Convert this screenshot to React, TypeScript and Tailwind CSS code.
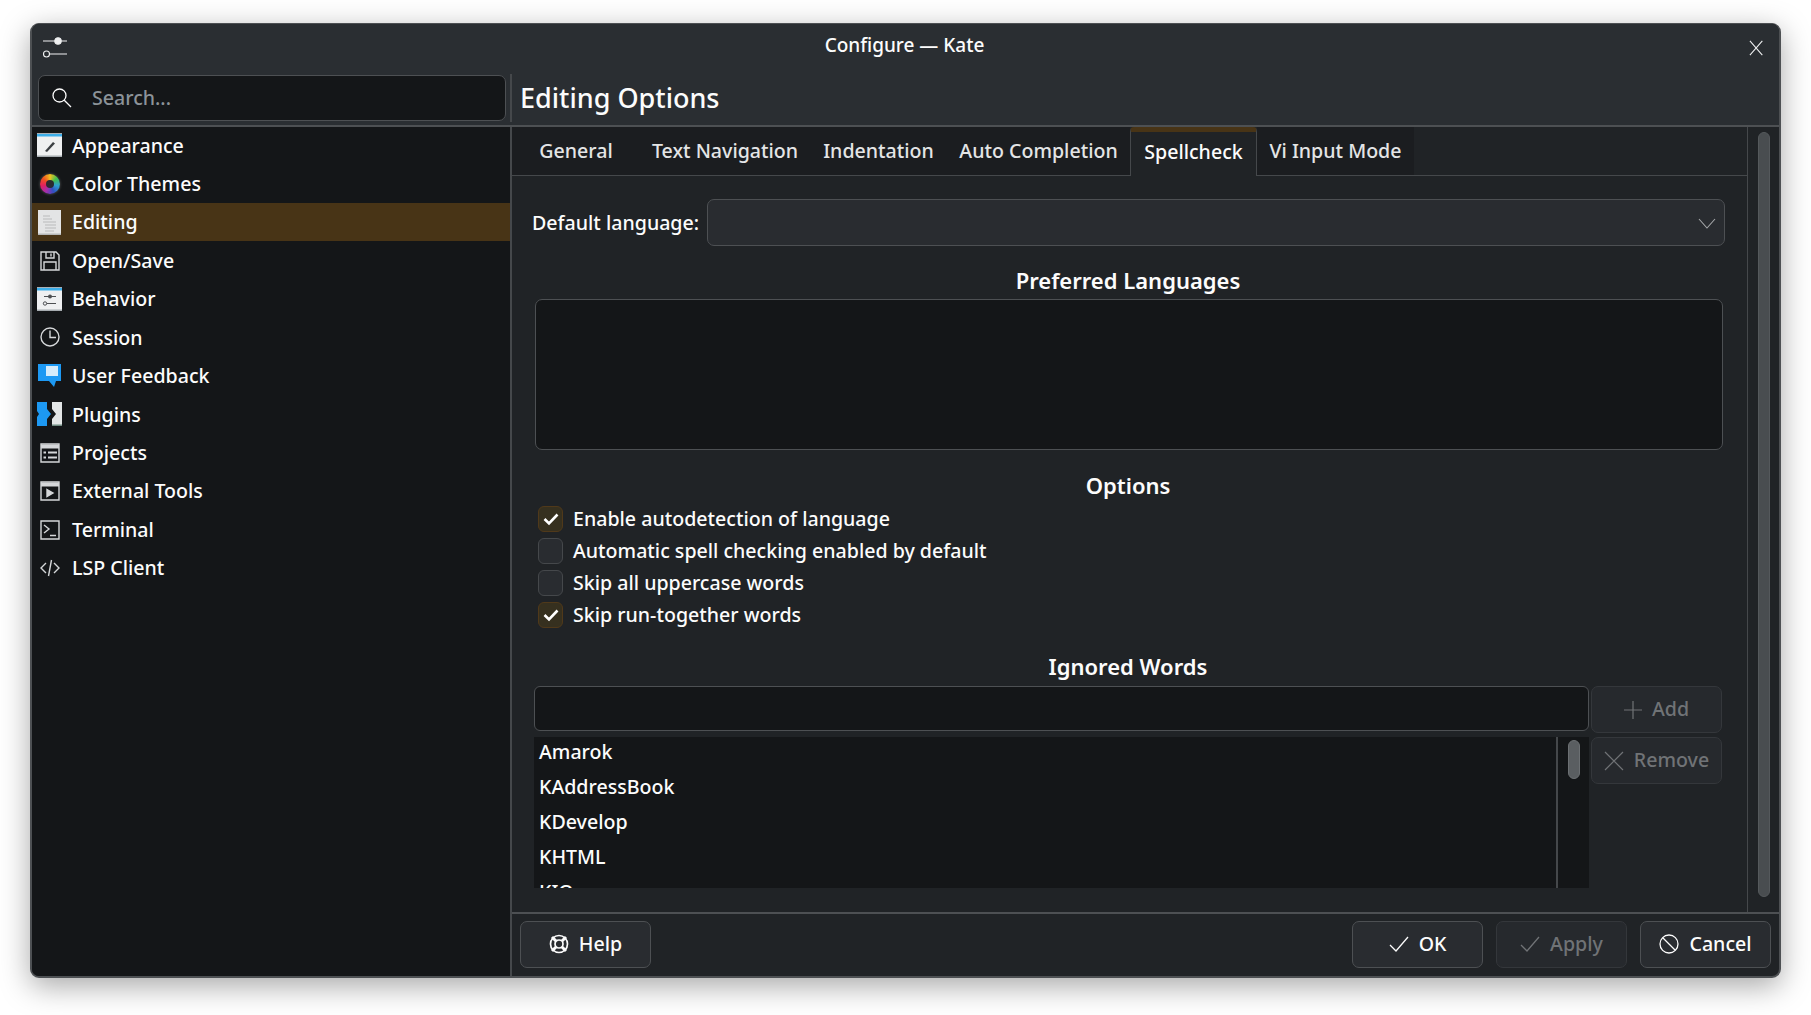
import React from "react";

const font = "font-['Noto_Sans','Open_Sans',sans-serif]";

function Line({ d, size = 20, w = 1.2, vb = 20 }: { d: string; size?: number; w?: number; vb?: number }) {
  return (
    <svg width={size} height={size} viewBox={`0 0 ${vb} ${vb}`} fill="none" stroke="currentColor" strokeWidth={w} className="shrink-0">
      <path d={d} />
    </svg>
  );
}

function WindowIcon({ children }: { children?: React.ReactNode }) {
  return (
    <svg width="25" height="24" viewBox="0 0 25 24" className="shrink-0">
      <rect x="0" y="0" width="25" height="24" fill="#eff0f1" />
      <rect x="0" y="0" width="25" height="1" fill="#a9b0b6" />
      <rect x="0" y="1" width="25" height="2.5" fill="#3daee9" />
      <rect x="0" y="22.5" width="25" height="1.5" fill="#a6acb0" />
      {children}
    </svg>
  );
}

function ColorWheel() {
  return (
    <div className="w-[25px] h-[24px] flex items-center justify-center shrink-0">
      <div className="w-[20px] h-[20px] rounded-full bg-[conic-gradient(#f0c020,#3fbf50,#2f9fd0,#3050c0,#a030b0,#e02060,#f05020,#f0c020)] flex items-center justify-center shadow-[0_0_3px_rgba(255,255,255,0.3)]">
        <div className="w-[8px] h-[8px] rounded-full bg-[#2a2a30]" />
      </div>
    </div>
  );
}

function Mono({ children }: { children: React.ReactNode }) {
  return (
    <div className="w-[25px] h-[24px] flex items-center justify-center shrink-0 text-[#d5d7d9]">
      <svg width="20" height="20" viewBox="0 0 20 20" fill="none" stroke="currentColor" strokeWidth="1.4">
        {children}
      </svg>
    </div>
  );
}

const sidebarItems: { label: string; icon: React.ReactNode }[] = [
  {
    label: "Appearance",
    icon: (
      <WindowIcon>
        <path d="M8 18 L16 9 L18 10.5 L10 19 Z" fill="#3b3f43" />
      </WindowIcon>
    ),
  },
  { label: "Color Themes", icon: <ColorWheel /> },
  {
    label: "Editing",
    icon: (
      <div className="w-[25px] h-[24px] flex items-center justify-center shrink-0">
        <svg width="23" height="25" viewBox="0 0 23 25">
          <rect width="23" height="25" fill="#e3e4e5" />
          <rect y="23.5" width="23" height="1.5" fill="#b5b7b8" />
          <path d="M5 6h7M5 9h9M5 12h13M7 15h11M7 18h11M7 21h9" stroke="#b9babb" strokeWidth="1.1" />
        </svg>
      </div>
    ),
  },
  {
    label: "Open/Save",
    icon: (
      <Mono>
        <path d="M1 1h15l3 3v15H1zM6 1v6h8V1M4 19v-8h12v8M11 2.5v3" />
      </Mono>
    ),
  },
  {
    label: "Behavior",
    icon: (
      <WindowIcon>
        <path d="M7 9.5h12M6 16.5h13" stroke="#4d4f52" strokeWidth="1" />
        <circle cx="13" cy="9.5" r="2" fill="#4d4f52" />
        <circle cx="8" cy="16.5" r="1.7" fill="#eff0f1" stroke="#4d4f52" />
      </WindowIcon>
    ),
  },
  {
    label: "Session",
    icon: (
      <Mono>
        <circle cx="10" cy="10" r="9" />
        <path d="M10 3.5V10.5H16" />
      </Mono>
    ),
  },
  {
    label: "User Feedback",
    icon: (
      <div className="w-[25px] h-[24px] flex items-center justify-center shrink-0">
        <svg width="23" height="23" viewBox="0 0 23 23">
          <path d="M0 0H23V17H18L16 23L11 17H0Z" fill="#1d99f3" />
          <rect x="8" y="2" width="12" height="10" fill="#d6ecfb" />
        </svg>
      </div>
    ),
  },
  {
    label: "Plugins",
    icon: (
      <svg width="25" height="24" viewBox="0 0 25 24" className="shrink-0">
        <path d="M0 0H10V7L14 12L10 17V24H0V15L2 12L0 9Z" fill="#1d99f3" />
        <path d="M25 0H15V7L19 12L15 17V24H25Z" fill="#e3e6e6" />
        <rect x="15" y="22.5" width="10" height="1.5" fill="#6f8a80" />
      </svg>
    ),
  },
  {
    label: "Projects",
    icon: (
      <Mono>
        <path d="M1 1h18v18H1z" />
        <path d="M1 3.5h18" strokeWidth="4" />
        <path d="M8 9.5h9M8 14.5h9M3.5 9.5h2.5M3.5 14.5h2.5" strokeWidth="1.8" />
      </Mono>
    ),
  },
  {
    label: "External Tools",
    icon: (
      <Mono>
        <path d="M1 1h18v18H1z" />
        <path d="M1 3.5h18" strokeWidth="4" />
        <path d="M7 8.5l6 3.5-6 3.5z" fill="currentColor" />
      </Mono>
    ),
  },
  {
    label: "Terminal",
    icon: (
      <Mono>
        <path d="M1 1h18v18H1zM4 5l5 4-5 4M10 15.5h6" />
      </Mono>
    ),
  },
  {
    label: "LSP Client",
    icon: (
      <Mono>
        <path d="M6 5L1 10l5 5M14 5l5 5-5 5M11.5 2L8.5 18" />
      </Mono>
    ),
  },
];

function SidebarRow({ label, icon, active }: { label: string; icon: React.ReactNode; active?: boolean }) {
  return (
    <div className={`h-[38.45px] pl-[5px] flex items-center gap-[10px] ${active ? "bg-[#483416]" : ""}`}>
      {icon}
      <span className="text-[19.6px] text-[#fcfcfc]">{label}</span>
    </div>
  );
}

const tabs = [
  { label: "General", w: "w-[128px]" },
  { label: "Text Navigation", w: "w-[170px]" },
  { label: "Indentation", w: "w-[137px]" },
  { label: "Auto Completion", w: "w-[183px]" },
  { label: "Spellcheck", w: "w-[127px]", active: true },
  { label: "Vi Input Mode", w: "w-[157px]" },
];

function TabBar() {
  return (
    <div className="h-[49px] flex border-b border-[#45484b]">
      {tabs.map((t) =>
        t.active ? (
          <div
            key={t.label}
            className={`${t.w} h-[49px] -mb-px pb-[4px] flex items-center justify-center text-[19.6px] text-[#fcfcfc] bg-[#202326] border-x border-[#45484b] border-t-[5px] border-t-[#483416] rounded-t-[4px]`}
          >
            {t.label}
          </div>
        ) : (
          <div key={t.label} className={`${t.w} flex items-center justify-center text-[19.6px] text-[#e4e5e6] bg-[#1b1d20]`}>
            {t.label}
          </div>
        )
      )}
    </div>
  );
}

function Check({ label, on }: { label: string; on?: boolean }) {
  return (
    <div className="h-[32px] flex items-center gap-[10px]">
      <div
        className={`ml-[4px] w-[25px] h-[26px] rounded-[6px] border flex items-center justify-center text-white ${
          on ? "border-[#50391a] bg-[#36301f]" : "border-[#45484b] bg-[#292c30]"
        }`}
      >
        {on && <Line d="M3.5 10l4.5 4.5 8.5-9" size={20} w={2.6} />}
      </div>
      <span className="text-[19.6px] text-[#fcfcfc]">{label}</span>
    </div>
  );
}

function Heading({ children, className = "" }: { children: React.ReactNode; className?: string }) {
  return <div className={`h-[30px] pr-[1px] text-center text-[22px] leading-[28px] font-semibold text-[#fcfcfc] ${className}`}>{children}</div>;
}

function Btn({
  icon,
  label,
  disabled,
  className = "",
}: {
  icon: React.ReactNode;
  label: string;
  disabled?: boolean;
  className?: string;
}) {
  return (
    <div
      className={`w-[131px] h-[47px] rounded-[7px] border flex items-center justify-center gap-[10px] text-[19.6px] ${
        disabled ? "border-[#34373b] bg-[#26292d] text-[#707376]" : "border-[#4d5053] bg-[#292c30] text-[#fcfcfc]"
      } ${className}`}
    >
      {icon}
      <span className="-mt-[1px]">{label}</span>
    </div>
  );
}

export default function App() {
  return (
    <div className={`w-[1811px] h-[1015px] bg-white pt-[23px] pl-[30px] overflow-hidden font-medium ${font}`}>
      <div className="w-[1751px] h-[955px] rounded-[9px] overflow-hidden border-x-2 border-b-2 border-t border-[#4d5053] bg-[#202326] flex flex-col shadow-[0_8px_30px_rgba(0,0,0,0.35)]">
        {/* header */}
        <div className="h-[103px] shrink-0 bg-[#2a2e32] border-b-2 border-[#4d5053] flex flex-col">
          <div className="h-[47px] flex items-center justify-between">
            <div className="w-[60px] pl-[10px] pb-[2px] text-[#eff0f1]">
              <svg width="26" height="26" viewBox="0 0 26 26" fill="none" stroke="currentColor" strokeWidth="1.1">
                <path d="M1 7h24M1 20h24" />
                <circle cx="16" cy="7" r="3.2" fill="currentColor" />
                <circle cx="4.5" cy="20" r="3" fill="#2a2e32" />
              </svg>
            </div>
            <div className="mr-[2px] pb-[5px] text-[19px] text-[#fcfcfc]">Configure — Kate</div>
            <div className="w-[60px] pl-[30px] text-[#eff0f1]">
              <Line d="M1 1l14 16M15 1L1 17" size={16} vb={18} w={1.2} />
            </div>
          </div>
          <div className="flex items-center flex-1">
            <div className="ml-[6px] w-[468px] h-[46px] rounded-[7px] border border-[#4d5053] bg-[#141618] flex items-center pl-[13px] gap-[20px] text-[#fcfcfc]">
              <Line d="M12.5 12.5L19 19M14 7.5a6.5 6.5 0 1 1-13 0a6.5 6.5 0 0 1 13 0z" size={20} w={1.3} />
              <span className="text-[19.6px] text-[#8c9399]">Search...</span>
            </div>
            <div className="ml-[4px] w-[2px] h-[48px] bg-[#45484b]" />
            <div className="ml-[8px] pt-[1px] text-[27px] text-[#fcfcfc]">Editing Options</div>
          </div>
        </div>

        <div className="flex-1 flex min-h-0">
          {/* sidebar */}
          <div className="w-[478px] shrink-0 bg-[#141618] border-r-2 border-[#45484b] box-content">
            <div className="-mt-[1px]">
              {sidebarItems.map((it) => (
                <SidebarRow key={it.label} label={it.label} icon={it.icon} active={it.label === "Editing"} />
              ))}
            </div>
          </div>

          {/* right column */}
          <div className="flex-1 flex flex-col min-w-0">
            <div className="h-[785px] flex shrink-0">
              <div className="flex-1 min-w-0">
                <TabBar />
                <div className="pl-[20px] pr-[22px]">
                  <div className="mt-[23px] h-[47px] flex items-center">
                    <span className="w-[175px] shrink-0 text-[19.6px] whitespace-nowrap text-[#fcfcfc]">Default language:</span>
                    <div className="flex-1 h-[47px] rounded-[7px] border border-[#4d5053] bg-[#292c30] flex items-center justify-end pr-[8px] text-[#a5a8aa]">
                      <Line d="M1 5l8 9 8-9" size={18} vb={18} w={1.1} />
                    </div>
                  </div>
                  <Heading className="mt-[20px]">Preferred Languages</Heading>
                  <div className="mt-[3px] ml-[3px] mr-[2px] h-[151px] rounded-[7px] border border-[#4d5053] bg-[#141618]" />
                  <Heading className="mt-[21px]">Options</Heading>
                  <div className="mt-[2px] ml-[2px]">
                    <Check label="Enable autodetection of language" on />
                    <Check label="Automatic spell checking enabled by default" />
                    <Check label="Skip all uppercase words" />
                    <Check label="Skip run-together words" on />
                  </div>
                  <Heading className="mt-[21px]">Ignored Words</Heading>
                  <div className="mt-[4px] ml-[2px] flex gap-[2px]">
                    <div className="w-[1055px]">
                      <div className="h-[45px] rounded-[6px] border border-[#4d5053] bg-[#141618]" />
                      <div className="mt-[6px] h-[151px] bg-[#141618] flex overflow-hidden">
                        <div className="flex-1 pl-[5px] -mt-[3px] text-[19.6px] text-[#fcfcfc]">
                          {["Amarok", "KAddressBook", "KDevelop", "KHTML", "KIO"].map((w) => (
                            <div key={w} className="h-[35px] flex items-center">
                              {w}
                            </div>
                          ))}
                        </div>
                        <div className="w-[33px] border-l-2 border-[#45484b] pt-[3px] pl-[10px]">
                          <div className="w-[12px] h-[39px] rounded-full bg-[#5a5e61] border border-[#6c7073]" />
                        </div>
                      </div>
                    </div>
                    <div className="flex flex-col gap-[4px]">
                      <Btn disabled label="Add" className="h-[47px] w-[130px]" icon={<Line d="M9 0v18M0 9h18" size={18} vb={18} w={1.2} />} />
                      <Btn disabled label="Remove" className="h-[47px] w-[130px]" icon={<Line d="M1 1l18 18M19 1L1 19" size={20} vb={20} w={1.2} />} />
                    </div>
                  </div>
                </div>
              </div>
              <div className="w-[32px] shrink-0 border-l border-[#45484b] pt-[5px] pl-[10px]">
                <div className="w-[12px] h-[765px] rounded-full bg-[#494d50] border border-[#55595c]" />
              </div>
            </div>

            {/* footer */}
            <div className="flex-1 border-t-2 border-[#4d5053] flex items-center justify-between pl-[8px] pr-[8px] pb-[2px]">
              <Btn
                label="Help"
                icon={
                  <svg width="20" height="20" viewBox="0 0 20 20" fill="none" stroke="currentColor" strokeWidth="1.7">
                    <circle cx="10" cy="10" r="8.5" />
                    <circle cx="10" cy="10" r="4" />
                    <path d="M3 3l4 4M17 3l-4 4M3 17l4-4M17 17l-4-4" strokeWidth="3" />
                  </svg>
                }
              />
              <div className="flex gap-[13px]">
                <Btn label="OK" icon={<Line d="M1 11l6 6L19 3" size={20} w={1.3} />} />
                <Btn disabled label="Apply" icon={<Line d="M1 11l6 6L19 3" size={20} w={1.3} />} />
                <Btn label="Cancel" icon={<Line d="M4 4l12 12M19 10a9 9 0 1 1-18 0a9 9 0 0 1 18 0z" size={20} w={1.3} />} />
              </div>
            </div>
          </div>
        </div>
      </div>
    </div>
  );
}
